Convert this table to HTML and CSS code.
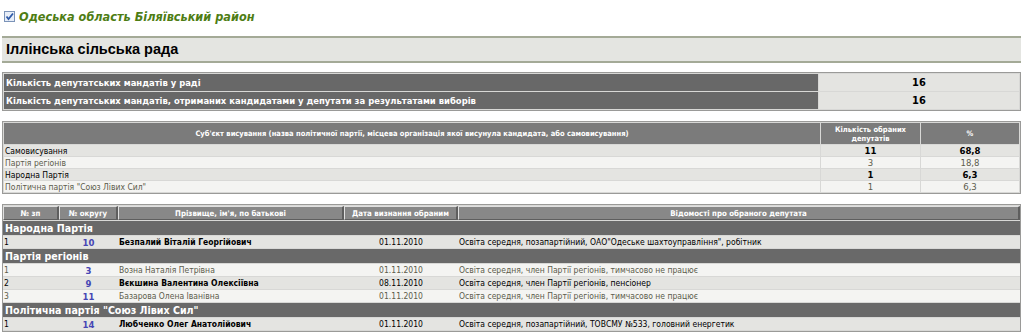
FILE: index.html
```html
<!DOCTYPE html>
<html lang="uk">
<head>
<meta charset="utf-8">
<title>Іллінська сільська рада</title>
<link rel="stylesheet" href="styles.css">
</head>
<body>
<div class="region">
  <svg class="chk" width="11" height="11" viewBox="0 0 11 11">
    <rect x="0.5" y="0.5" width="10" height="10" fill="#e8eef8" stroke="#7b93b8"/>
    <path d="M2.5 5.5 L4.5 8 L9 2.5" fill="none" stroke="#2f5aa8" stroke-width="1.8"/>
  </svg>
  <span class="region-title">Одеська область Біляївський район</span>
</div>
<div class="council">Іллінська сільська рада</div>

<table class="t-mandates">
  <tr><td class="lbl">Кількість депутатських мандатів у раді</td><td class="val">16</td></tr>
  <tr><td class="lbl">Кількість депутатських мандатів, отриманих кандидатами у депутати за результатами виборів</td><td class="val">16</td></tr>
</table>

<table class="t-parties">
  <tr>
    <th class="c-name">Суб'єкт висування (назва політичної партії, місцева організація якої висунула кандидата, або самовисування)</th>
    <th class="c-cnt">Кількість обраних<br>депутатів</th>
    <th class="c-pct">%</th>
  </tr>
  <tr class="dk"><td>Самовисування</td><td class="num">11</td><td class="num">68,8</td></tr>
  <tr class="lt"><td>Партія регіонів</td><td class="num">3</td><td class="num">18,8</td></tr>
  <tr class="dk"><td>Народна Партія</td><td class="num">1</td><td class="num">6,3</td></tr>
  <tr class="lt"><td>Політична партія "Союз Лівих Сил"</td><td class="num">1</td><td class="num">6,3</td></tr>
</table>

<table class="t-deps">
  <tr>
    <th class="w1">№ зп</th>
    <th class="w2">№ округу</th>
    <th class="w3">Прізвище, ім'я, по батькові</th>
    <th class="w4">Дата визнання обраним</th>
    <th>Відомості про обраного депутата</th>
  </tr>
  <tr class="grp"><td colspan="5">Народна Партія</td></tr>
  <tr class="dk"><td>1</td><td class="okr">10</td><td class="nm">Безпалий Віталій Георгійович</td><td class="dt">01.11.2010</td><td>Освіта середня, позапартійний, ОАО"Одеське шахтоуправління", робітник</td></tr>
  <tr class="grp"><td colspan="5">Партія регіонів</td></tr>
  <tr class="lt"><td>1</td><td class="okr">3</td><td>Возна Наталія Петрівна</td><td class="dt">01.11.2010</td><td>Освіта середня, член Партії регіонів, тимчасово не працює</td></tr>
  <tr class="dk"><td>2</td><td class="okr">9</td><td class="nm">Вєкшина Валентина Олексіївна</td><td class="dt">08.11.2010</td><td>Освіта середня, член Партії регіонів, пенсіонер</td></tr>
  <tr class="lt"><td>3</td><td class="okr">11</td><td>Базарова Олена Іванівна</td><td class="dt">01.11.2010</td><td>Освіта середня, член Партії регіонів, тимчасово не працює</td></tr>
  <tr class="grp"><td colspan="5">Політична партія "Союз Лівих Сил"</td></tr>
  <tr class="dk"><td>1</td><td class="okr">14</td><td class="nm">Любченко Олег Анатолійович</td><td class="dt">01.11.2010</td><td>Освіта середня, позапартійний, ТОВСМУ №533, головний енергетик</td></tr>
</table>
</body>
</html>
```

FILE: styles.css
```css
html, body {
  margin: 0;
  padding: 0;
  background: #ffffff;
}
body {
  padding: 0 3px 0 2px;
  font-family: "DejaVu Sans Condensed", "DejaVu Sans", sans-serif;
  font-size: 8.5px;
  color: #000;
}
.region {
  display: flex;
  align-items: center;
  gap: 4px;
  height: 20px;
  padding-top: 6px;
  padding-left: 2px;
}
.region-title {
  font-family: "DejaVu Sans Condensed", "DejaVu Sans", sans-serif;
  font-weight: bold;
  font-style: italic;
  font-size: 12.6px;
  color: #4e7d14;
}
.council {
  margin-top: 10px;
  background: #e4e5e1;
  border-top: 2px solid #a4aa97;
  border-bottom: 2px solid #a4aa97;
  height: 23px;
  line-height: 23px;
  padding-left: 4px;
  font-family: "Liberation Sans", Arial, sans-serif;
  font-weight: bold;
  font-size: 14.5px;
  color: #000;
}
table {
  width: 100%;
  border-collapse: separate;
  border-spacing: 1px;
  background: #d8d8d6;
  border: 1px solid #9a9a98;
}
td, th {
  padding: 0 1px;
}
.t-mandates {
  margin-top: 9px;
}
.t-mandates td {
  height: 17px;
}
.t-mandates .lbl {
  background: #686868;
  color: #fff;
  font-weight: bold;
  font-size: 9.4px;
  padding-left: 2px;
}
.t-mandates .val {
  width: 198px;
  background: #e4e4e1;
  text-align: center;
  font-weight: bold;
  font-size: 11px;
}
.t-parties {
  margin-top: 10px;
}
.t-parties th {
  background: #7b7b7b;
  color: #fff;
  font-size: 7.5px;
  font-weight: bold;
  height: 21px;
  line-height: 9px;
}
.t-parties .c-cnt { width: 97px; }
.t-parties .c-pct { width: 96px; }
.t-parties td { height: 11px; }
.num { text-align: center; }
tr.dk td { background: #e4e4e1; color: #000; }
tr.dk td.num { font-weight: bold; font-size: 9.5px; }
tr.lt td { background: #f4f4f2; color: #5c5c4c; }
tr.lt td.num { font-size: 9.5px; }
.t-deps {
  margin-top: 10px;
  border-spacing: 0 1px;
}
.t-deps th {
  background: #888888;
  color: #fff;
  font-weight: bold;
  font-size: 7.8px;
  height: 12px;
  padding: 0;
  border: 1px solid #e0e0e0;
  border-right: 2px solid #5e5e5e;
  border-bottom-color: #5e5e5e;
}
.t-deps .w1 { width: 53px; }
.t-deps .w2 { width: 56px; }
.t-deps .w3 { width: 223px; }
.t-deps .w4 { width: 111px; }
.t-deps td { height: 12px; }
.t-deps tr.grp td {
  background: #696969;
  color: #fff;
  font-weight: bold;
  font-size: 10.6px;
  height: 14px;
  padding-left: 2px;
}
.t-deps td.okr {
  text-align: center;
  font-weight: bold;
  color: #4646b4;
  font-size: 9.5px;
}
.nm { font-weight: bold; }
.dt { text-align: center; }
```
